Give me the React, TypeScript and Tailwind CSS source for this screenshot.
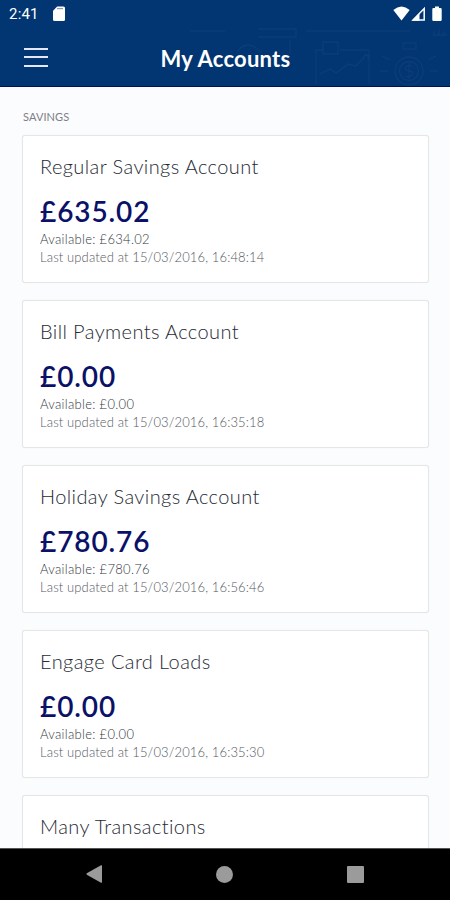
import clsx from 'clsx';

interface Account {
  name: string;
  balance?: string;
  available?: string;
  updated?: string;
}

const accounts: Account[] = [
  { name: 'Regular Savings Account', balance: '£635.02', available: '£634.02', updated: '15/03/2016, 16:48:14' },
  { name: 'Bill Payments Account', balance: '£0.00', available: '£0.00', updated: '15/03/2016, 16:35:18' },
  { name: 'Holiday Savings Account', balance: '£780.76', available: '£780.76', updated: '15/03/2016, 16:56:46' },
  { name: 'Engage Card Loads', balance: '£0.00', available: '£0.00', updated: '15/03/2016, 16:35:30' },
  { name: 'Many Transactions' },
];

export default function App() {
  return (
    <div className="flex flex-col w-[450px] h-[900px] overflow-hidden bg-[#fbfcfe] font-['Lato',sans-serif] [font-variant-ligatures:none]">
      <header className="relative shrink-0 h-[87px] bg-[#023672] border-b border-[#04115a] text-white">
        <HeaderArt />
        <StatusBar />
        <div className="relative grid grid-cols-[1fr_auto_1fr] items-center h-[58px] px-6">
          <button aria-label="Menu" className="flex flex-col justify-between w-6 h-[19px]">
            <span className="h-[2px] w-full bg-[#e6e6fa]" />
            <span className="h-[2px] w-full bg-[#e6e6fa]" />
            <span className="h-[2px] w-full bg-[#e6e6fa]" />
          </button>
          <h1 className="pt-[3px] pl-px text-[22px] leading-none font-bold tracking-[0.25px]">My Accounts</h1>
        </div>
      </header>

      <main className="flex-1 min-h-0 overflow-hidden px-[22px]">
        <h2 className="pt-[23px] pl-px h-12 text-[11px] leading-[14px] tracking-[0.1px] text-[#7b8086]">SAVINGS</h2>
        <div className="flex flex-col gap-[17px]">
          {accounts.map((a) => <AccountCard key={a.name} account={a} />)}
        </div>
      </main>

      <NavBar />
    </div>
  );
}

function AccountCard({ account }: { account: Account }) {
  return (
    <section className="w-[407px] h-[148px] shrink-0 px-[17px] pt-[17px] bg-white border border-[#e3e7e8] rounded-[3px] shadow-[0_0_1px_#dfe4e6]">
      <h3 className="text-[20px] leading-[26px] font-light tracking-[0.4px] text-[#252933]">{account.name}</h3>
      {account.balance && (
        <>
          <p className="mt-[13px] text-[28px] leading-[38px] font-semibold tracking-[0.9px] text-[#0b1168]">{account.balance}</p>
          <p className="text-[13px] leading-[18px] font-light tracking-[0.3px] text-[#33373d]">Available: {account.available}</p>
          <p className="text-[13px] leading-[18px] font-light tracking-[0.13px] text-[#55595f]">Last updated at {account.updated}</p>
        </>
      )}
    </section>
  );
}

function StatusBar() {
  return (
    <div className="relative flex items-center h-7 pl-[9px] pr-[8px]">
      <span className="w-[44px] pt-px text-[15px] leading-none tracking-[0.2px] font-['Roboto',sans-serif]">2:41</span>
      <svg className="w-3 h-4" viewBox="0 0 12 16" fill="#fff">
        <path d="M4.2 0.5H10.5Q12 0.5 12 2V13.5Q12 15 10.5 15H1.5Q0 15 0 13.5V4.7Z" />
        <path d="M4 2.6h6" stroke="#8d9ab5" strokeWidth="1.2" />
      </svg>
      <svg className="ml-auto w-[17px] h-4" viewBox="0 0 17 16" fill="#fff">
        <path d="M0.3 4Q8.5 -3 16.7 4L8.5 14.5Z" />
      </svg>
      <svg className="ml-[1px] w-[15px] h-4" viewBox="0 0 15 16">
        <path d="M2 14L13.2 2.5V14Z" fill="none" stroke="#fff" strokeWidth="1.5" />
        <path d="M1 14.7L8.5 7V14.7Z" fill="#fff" />
      </svg>
      <svg className="ml-[6px] w-[10px] h-4" viewBox="0 0 10 16" fill="#fff">
        <path d="M3 0.5H7V2H8.5Q9.7 2 9.7 3.2V13.8Q9.7 15 8.5 15H1.5Q0.3 15 0.3 13.8V3.2Q0.3 2 1.5 2H3Z" />
      </svg>
    </div>
  );
}

// faint finance doodles behind the title bar
function HeaderArt() {
  return (
    <svg className="absolute inset-0 w-full h-full" viewBox="0 0 450 86" fill="none" stroke="#17477f" strokeWidth="1.3" opacity="0.45">
      <path d="M190 31h35M258 29h38v8h-38M306 31h104M237 52q10-14 24 0M290 40v14" />
      <path d="M316 84V50h7M340 50h29V84M323 42h15v12h-15zM320 74l10-5 6 4 12-9 8 2 11-12M364 55h4v4" />
      <circle cx="409" cy="71" r="14" />
      <circle cx="409" cy="71" r="9.5" />
      <path d="M413 67q-4-3-7 0t3 4 3 4-7 1M409 63v16M403 43h13v6h-13zM390 60l-8-4M388 71h-8M428 60l8-4M430 71h8M433 35h14M434 31v5M439 29v7M444 31v5" />
    </svg>
  );
}

function NavBar() {
  const shape = 'bg-[#9b9b9b]';
  return (
    <nav className="flex items-center justify-between shrink-0 h-[52px] px-[86px] pb-px bg-black border-t border-[#555]">
      <svg className="w-4 h-[18px]" viewBox="0 0 16 18" fill="#9b9b9b">
        <path d="M15 0.3Q16 0 16 1V17Q16 18 15 17.7L0.8 9.7Q0 9 0.8 8.3Z" />
      </svg>
      <span className={clsx(shape, 'w-[17px] h-[17px] rounded-full')} />
      <span className={clsx(shape, 'w-[17px] h-[17px] rounded-[1px]')} />
    </nav>
  );
}
